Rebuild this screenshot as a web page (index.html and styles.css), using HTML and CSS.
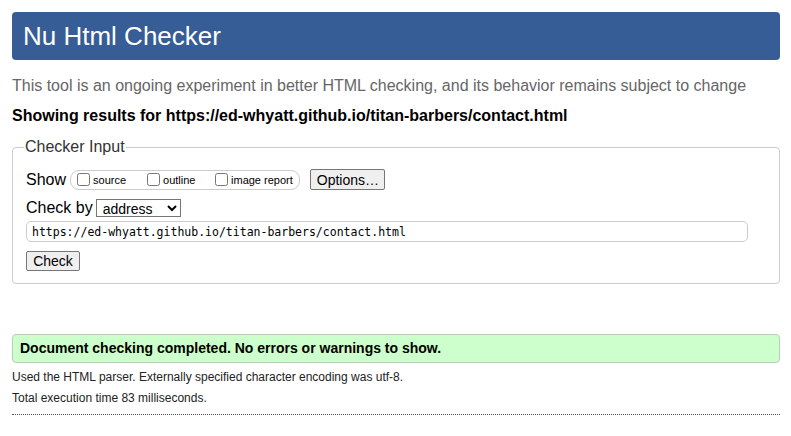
FILE: index.html
```html
<!DOCTYPE html>
<html lang="en">
<head>
<meta charset="utf-8">
<title>Nu Html Checker</title>
<link rel="stylesheet" href="styles.css">
</head>
<body>
<h1 class="banner">Nu Html Checker</h1>
<p class="intro">This tool is an ongoing experiment in better HTML checking, and its behavior remains subject to change</p>
<p class="showing">Showing results for https://ed-whyatt.github.io/titan-barbers/contact.html</p>
<form class="checker">
  <fieldset class="panel">
    <legend class="panel-legend">Checker Input</legend>
    <div class="row">
      <span class="label">Show</span>
      <span class="opts">
        <label class="opt"><input type="checkbox" class="cb"><span>source</span></label>
        <label class="opt"><input type="checkbox" class="cb"><span>outline</span></label>
        <label class="opt"><input type="checkbox" class="cb"><span>image report</span></label>
      </span>
      <button type="button" class="btn btn-options">Options…</button>
    </div>
    <div class="row row-check">
      <span class="label">Check by</span>
      <select class="sel"><option>address</option></select>
    </div>
    <input class="url" type="text" value="https://ed-whyatt.github.io/titan-barbers/contact.html">
    <div class="row row-submit">
      <button type="button" class="btn btn-check">Check</button>
    </div>
  </fieldset>
</form>
<div class="success">Document checking completed. No errors or warnings to show.</div>
<p class="meta">Used the HTML parser. Externally specified character encoding was utf-8.</p>
<p class="meta meta-last">Total execution time 83 milliseconds.</p>
</body>
</html>
```
FILE: styles.css
```css
html, body {
  margin: 0;
  background: #ffffff;
}
body {
  padding: 12px 11px 12px 12px;
  font-family: "Liberation Sans", Arial, sans-serif;
  color: #000;
}
.banner {
  margin: 0;
  height: 48px;
  line-height: 48px;
  padding: 0 11px;
  background: #365d95;
  color: #fff;
  font-size: 26px;
  font-weight: normal;
  border-radius: 4px;
}
.intro {
  margin: 16px 0 0;
  font-size: 16px;
  line-height: 20px;
  color: #666;
}
.showing {
  margin: 10px 0 0;
  font-size: 16px;
  line-height: 20px;
  font-weight: bold;
}
.checker {
  margin: 0;
}
.panel {
  margin: 12px 0 0;
  padding: 13px 13px 12px 13px;
  border: 1px solid #ccc;
  border-radius: 4px;
}
.panel-legend {
  padding: 0 1px;
  margin-left: -2px;
  font-size: 16px;
  color: #333;
}
.row {
  display: flex;
  align-items: center;
  font-size: 16px;
  line-height: 20px;
}
.label {
  color: #000;
}
.opts {
  display: flex;
  align-items: center;
  margin-left: 4px;
  height: 20px;
  box-sizing: border-box;
  padding: 0 6px;
  border: 1px solid #ccc;
  border-radius: 9px;
  white-space: nowrap;
}
.opt {
  display: flex;
  align-items: center;
  font-size: 11px;
  white-space: nowrap;
}
.opt:nth-child(1) { width: 70px; }
.opt:nth-child(2) { width: 68px; }
.cb {
  margin: 0 3px 0 0;
  width: 13px;
  height: 13px;
}
.btn {
  font-family: "Liberation Sans", Arial, sans-serif;
  background: #efefef;
  border: 1px solid #767676;
  border-radius: 2px;
  color: #000;
  padding: 0 6px;
}
.btn-options {
  margin-left: 10px;
  height: 21px;
  width: 75px;
  font-size: 14px;
}
.row-check {
  margin-top: 8px;
}
.sel {
  margin-left: 3px;
  width: 85px;
  height: 18px;
  font-family: "Liberation Sans", Arial, sans-serif;
  font-size: 14px;
  border: 1px solid #767676;
  border-radius: 0;
  padding: 0 0 0 2px;
  background: #fff;
}
.url {
  display: block;
  box-sizing: border-box;
  margin-top: 3px;
  width: 722px;
  height: 21px;
  padding: 0 5px;
  border: 1px solid #ccc;
  border-radius: 5px;
  font-family: "DejaVu Sans Mono", "Liberation Mono", monospace;
  font-size: 11.5px;
  color: #000;
}
.row-submit {
  margin-top: 9px;
}
.btn-check {
  width: 54px;
  height: 20px;
  font-size: 14px;
}
.success {
  margin-top: 50px;
  height: 29px;
  box-sizing: border-box;
  line-height: 27px;
  padding: 0 7px;
  background: #ccffcc;
  border: 1px solid #bbccbb;
  border-radius: 4px;
  font-size: 14px;
  font-weight: bold;
}
.meta {
  margin: 7px 0 0;
  font-size: 12px;
  line-height: 14px;
  color: #222;
}
.meta-last {
  padding-bottom: 9px;
  border-bottom: 1px dotted #555;
}
```
